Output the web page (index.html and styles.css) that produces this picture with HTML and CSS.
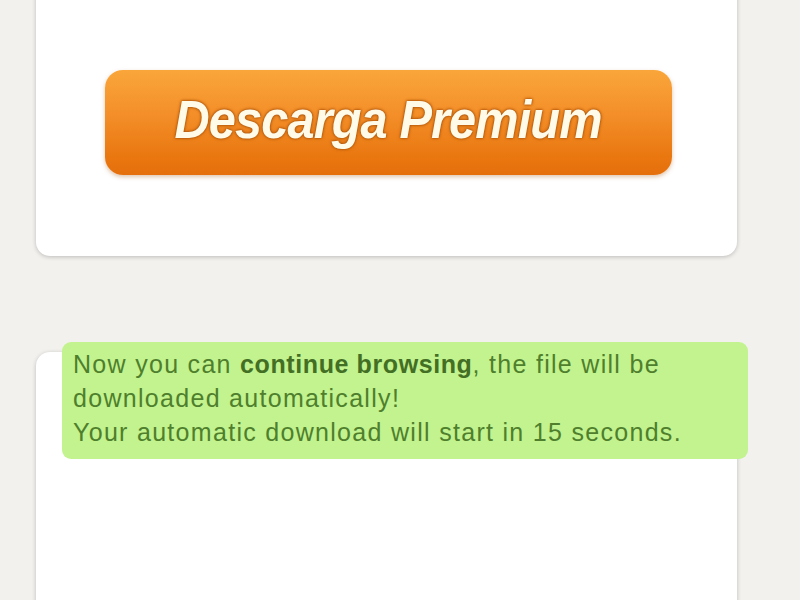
FILE: index.html
```html
<!DOCTYPE html>
<html>
<head>
<meta charset="utf-8">
<link rel="stylesheet" href="styles.css">
</head>
<body>
<div class="page">
  <div class="card card-top">
    <a class="premium-btn" href="#"><span class="premium-label">Descarga Premium</span></a>
  </div>
  <div class="card card-bottom">
    <div class="notice">
      Now you can <b>continue browsing</b>, the file will be downloaded automatically!<br>
      Your automatic download will start in 15 seconds.
    </div>
  </div>
</div>
</body>
</html>
```

FILE: styles.css
```css
html, body {
  margin: 0;
  padding: 0;
  background: #f2f1ee;
  overflow: hidden;
}
.page {
  width: 701px;
  padding-left: 36px;
  display: flex;
  flex-direction: column;
  gap: 96px;
  margin-top: -30px;
}
.card {
  background: #ffffff;
  border-radius: 14px;
  box-shadow: 0 1px 4px rgba(0, 0, 0, 0.22);
}
.card-top {
  padding: 100px 65px 81px 69px;
}
.premium-btn {
  display: flex;
  align-items: center;
  justify-content: center;
  height: 105px;
  border-radius: 18px;
  background: linear-gradient(to bottom, #f9a63a 0%, #f4902a 40%, #e9760f 85%, #e46f0c 100%);
  box-shadow: 0 2px 4px rgba(160, 90, 20, 0.35);
  text-decoration: none;
}
.premium-label {
  display: inline-block;
  font-family: "Liberation Sans", Arial, sans-serif;
  font-weight: bold;
  font-style: italic;
  font-size: 53px;
  letter-spacing: -1px;
  color: #fffbe8;
  transform: scaleX(0.92);
  margin-top: -6px;
  text-shadow: 0 0 2px #a94f06, 0 0 3px #b85c0c, 0 0 4px #c96a14;
}
.card-bottom {
  height: 320px;
  border-bottom-left-radius: 0;
  border-bottom-right-radius: 0;
}
.notice {
  margin: -10px -11px 0 26px;
  padding: 5px 11px 10px 11px;
  background: #c2f38f;
  border-radius: 9px;
  font-family: "Liberation Sans", Arial, sans-serif;
  font-size: 25px;
  line-height: 34px;
  color: #4f7f2c;
  letter-spacing: 1.3px;
}
.notice b {
  color: #436f24;
  letter-spacing: 0.6px;
}
```
